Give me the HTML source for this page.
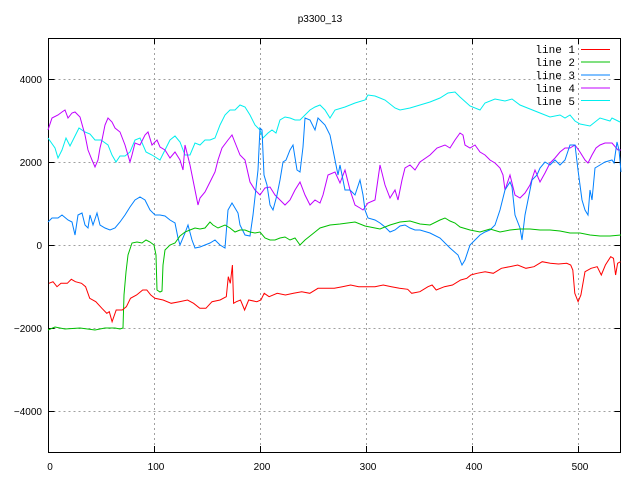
<!DOCTYPE html>
<html><head><meta charset="utf-8"><style>
html,body{margin:0;padding:0;background:#fff;}
svg{display:block;}
text{font-family:"Liberation Sans",sans-serif;font-size:10px;fill:#000;}
.m{font-family:"Liberation Mono",monospace;font-size:11px;}
</style></head><body>
<svg width="640" height="480" viewBox="0 0 640 480" xmlns="http://www.w3.org/2000/svg">
<rect width="640" height="480" fill="#fff"/>
<g stroke="#a0a0a0" stroke-width="1" stroke-dasharray="2,3" fill="none">
<path d="M154.5 38V452M260.5 38V452M366.5 38V452M472.5 38V452M578.5 38V452"/>
<path d="M48.5 79.5H621M48.5 162.5H621M48.5 245.5H621M48.5 328.5H621M48.5 411.5H621"/>
</g>
<g stroke="#000" stroke-width="1" fill="none">
<rect x="48.5" y="38.5" width="572" height="414"/>
<path d="M48.5 79.5h6M48.5 162.5h6M48.5 245.5h6M48.5 328.5h6M48.5 411.5h6M620.5 79.5h-6M620.5 162.5h-6M620.5 245.5h-6M620.5 328.5h-6M620.5 411.5h-6"/>
<path d="M48.5 452v-6M154.5 452v-6M260.5 452v-6M366.5 452v-6M472.5 452v-6M578.5 452v-6M154.5 38v6M260.5 38v6M366.5 38v6M472.5 38v6M578.5 38v6"/>
</g>
<text x="320" y="22" text-anchor="middle">p3300_13</text>
<g text-anchor="end">
<text x="42" y="83">4000</text><text x="42" y="166">2000</text><text x="42" y="249">0</text>
<text x="42" y="332">−2000</text><text x="42" y="415">−4000</text>
</g>
<g text-anchor="middle">
<text x="50" y="470">0</text><text x="156" y="470">100</text><text x="262" y="470">200</text>
<text x="368" y="470">300</text><text x="474" y="470">400</text><text x="580" y="470">500</text>
</g>
<g class="m" text-anchor="end">
<text class="m" x="575" y="53">line 1</text><text class="m" x="575" y="66">line 2</text>
<text class="m" x="575" y="79">line 3</text><text class="m" x="575" y="92">line 4</text>
<text class="m" x="575" y="105">line 5</text>
</g>
<g fill="none" stroke-width="1">
<path stroke="#ff0000" d="M581 49.5h29"/><path stroke="#00c000" d="M581 62h29"/>
<path stroke="#0080ff" d="M581 75h29"/><path stroke="#c000ff" d="M581 88h29"/>
<path stroke="#00eeee" d="M581 100.5h29"/>
<path stroke="#00eeee" d="M48 138L55 148L58 158L62 150L66 138L70 146L75 136L79 128L85 132L90 134L95 140L101 140L108 145L112 155L116 162L120 156L125 156L130 152L135 140L140 138L146 152L152 155L160 160L165 150L170 140L175 136L180 142L185 155L190 155L195 143L200 145L205 140L210 140L215 138L220 125L225 115L230 110L235 110L240 105L245 107L250 115L255 125L260 130L263 138L268 133L272 130L276 133L280 120L285 117L290 118L295 120L300 120L305 115L310 110L315 107L320 105L325 110L330 118L335 110L345 107L355 103L365 100L368 95L375 96L385 100L395 108L400 110L410 108L420 105L430 102L440 98L448 93L455 92L460 97L470 106L480 110L485 103L495 99L505 101L512 99L520 105L530 109L540 113L550 117L560 115L565 118L570 115L575 121L580 124L590 126L600 118L610 121L612 118L620 122"/>
<path stroke="#c000ff" d="M48 130L52 118L58 115L62 112L65 110L68 118L72 113L75 112L80 117L85 135L88 150L92 160L95 167L98 160L100 148L102 140L105 125L108 118L112 122L115 128L120 132L125 145L130 162L132 155L135 143L140 145L145 135L148 132L152 145L157 140L160 147L165 150L170 158L175 152L180 160L183 170L185 145L190 165L195 190L198 205L200 198L205 192L210 182L215 172L218 160L222 148L228 140L232 135L236 145L240 155L245 160L250 182L255 190L260 195L265 188L270 187L275 195L280 200L285 205L290 200L295 190L300 182L305 195L310 205L315 200L320 203L323 195L328 175L335 172L340 183L345 170L350 190L355 205L360 208L363 210L368 203L375 200L380 165L385 185L390 198L395 190L398 200L402 180L405 168L410 165L415 170L420 162L430 155L437 148L445 145L450 148L455 140L460 133L463 135L465 145L470 148L475 145L480 152L485 155L490 160L495 163L500 168L503 175L505 190L510 175L515 195L520 198L525 193L530 185L535 170L540 182L545 173L550 163L555 158L560 152L565 148L570 148L575 145L580 152L585 160L588 163L592 155L596 148L600 145L605 143L612 143L618 150L621 150"/>
<path stroke="#0080ff" d="M48 222L52 218L58 218L62 215L68 220L72 222L75 235L78 215L82 213L85 225L88 228L90 215L93 225L97 213L100 225L105 228L110 230L115 228L120 222L125 215L130 207L135 200L140 197L145 200L150 210L155 215L160 215L165 216L170 220L175 223L178 238L180 245L185 233L188 225L192 240L195 248L200 247L205 245L210 243L215 240L220 245L225 248L228 210L232 203L235 208L238 213L240 225L245 235L250 236L253 215L258 170L260 128L262 130L264 175L267 185L270 205L273 210L277 195L280 180L283 162L286 160L290 150L293 145L297 170L300 172L303 147L305 118L310 120L315 130L318 118L320 120L325 125L330 135L335 160L338 175L340 165L345 190L350 190L355 195L360 180L363 195L365 210L368 218L375 220L380 223L385 227L390 232L395 230L400 226L405 225L410 228L415 230L420 230L430 233L440 238L450 248L458 255L462 265L465 260L470 245L475 240L480 235L485 232L490 230L495 225L500 210L505 190L510 182L512 187L515 215L520 228L522 240L525 215L528 200L532 180L537 175L540 168L545 162L550 165L555 160L560 165L565 160L570 145L575 145L578 170L582 200L585 210L588 215L590 190L592 200L595 168L600 165L605 162L612 160L614 163L617 142L619 150L621 172"/>
<path stroke="#00c000" d="M48 330L55 327L65 329L80 328L95 330L105 328L115 328L120 329L123 328L124 295L126 272L128 255L132 243L137 242L142 243L146 240L150 242L154 245L156 255L157 290L160 292L162 291L163 265L165 250L170 245L175 243L180 236L185 232L190 230L195 228L200 229L205 228L210 222L213 225L218 228L225 225L230 228L235 232L240 230L245 230L250 232L255 233L260 232L265 238L270 240L275 240L280 238L285 237L290 240L295 238L300 245L305 240L310 236L315 232L320 228L330 225L340 224L355 222L365 226L380 229L390 225L400 222L410 221L420 224L430 225L440 220L445 218L450 221L455 223L460 227L470 230L480 232L490 229L500 232L510 230L520 229L530 229L540 230L550 230L560 231L570 233L580 233L590 235L600 236L610 236L621 235"/>
<path stroke="#ff0000" d="M48.9 283.3L53 281.7L57 286.7L61 283.3L67.3 283.3L71.3 279.3L75.4 281.7L81.5 283.3L85.6 286.7L89.7 298.3L95.8 301.7L101.9 308.3L106.8 313.3L109.3 311.7L112.1 321.7L116.2 310L122.3 310L126.4 306.7L130.5 298.3L136.6 295L142.7 290L146.8 290L150.8 295L154.9 298.3L163.1 300L171.2 303.3L179.4 301.7L187.5 300L193.6 303.3L199.8 308.3L205.9 308.3L212 301.7L220.1 300L226.3 296.7L228.3 276.7L230.3 283.3L232.4 265L233.6 303.3L236.4 301.7L240.5 300L244.6 310L248.7 300L256.8 301.7L260.9 300L264.2 293.3L269.1 296.7L277.2 293.3L285.4 295L293.5 293.3L301.7 291.7L309.8 293.3L318 288.3L326.1 288.3L334.3 288.3L342.4 286.7L350.6 285L358.7 286.7L366.9 286.7L375 286.7L383.2 285L391.4 286.7L399.5 288.3L407.7 289.3L411.7 293.3L419.9 291.7L428 286.7L432.1 285L436.2 290L444.4 286.7L452.5 285L460.7 280L466.8 278.3L470.9 275L477 273.3L485.1 271.7L493.3 273.3L501.4 268.3L509.6 266.7L517.7 265L525.9 268.3L534 266.7L542.2 261.7L550.3 263.3L558.5 264L566.7 263.3L570.7 265L572.8 270L574.8 293.3L578.1 301.7L580.9 295L585 271.7L591.1 268.3L597.2 266.7L601.3 275L605.4 265L610.7 256.7L613.5 258.3L615.6 275L617.6 263.3L620.5 261.7"/>
</g>
</svg>
</body></html>
